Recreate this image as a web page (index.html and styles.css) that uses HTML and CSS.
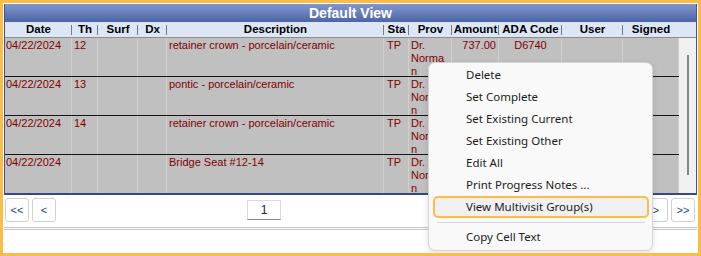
FILE: index.html
```html
<!DOCTYPE html>
<html>
<head>
<meta charset="utf-8">
<link rel="stylesheet" href="styles.css">
</head>
<body>
<div class="frame">
  <div class="panel">
    <div class="title">Default View</div>
    <div class="head">
      <div class="hc">Date</div>
      <div class="hc sep">Th</div>
      <div class="hc sep">Surf</div>
      <div class="hc sep">Dx</div>
      <div class="hc sep">Description</div>
      <div class="hc sep">Sta</div>
      <div class="hc sep">Prov</div>
      <div class="hc sep">Amount</div>
      <div class="hc sep">ADA Code</div>
      <div class="hc sep">User</div>
      <div class="hc sep">Signed</div>
      <div class="hc"></div>
    </div>
    <div class="body">
      <div class="rows">
        <div class="row">
          <div class="c">04/22/2024</div><div class="c th">12</div><div class="c"></div><div class="c"></div>
          <div class="c">retainer crown - porcelain/ceramic</div><div class="c sta">TP</div>
          <div class="c">Dr.<br>Norma<br>n</div><div class="c amt">737.00</div><div class="c ada">D6740</div>
          <div class="c"></div><div class="c"></div>
        </div>
        <div class="row">
          <div class="c">04/22/2024</div><div class="c th">13</div><div class="c"></div><div class="c"></div>
          <div class="c">pontic - porcelain/ceramic</div><div class="c sta">TP</div>
          <div class="c">Dr.<br>Norma<br>n</div><div class="c amt"></div><div class="c ada"></div>
          <div class="c"></div><div class="c"></div>
        </div>
        <div class="row">
          <div class="c">04/22/2024</div><div class="c th">14</div><div class="c"></div><div class="c"></div>
          <div class="c">retainer crown - porcelain/ceramic</div><div class="c sta">TP</div>
          <div class="c">Dr.<br>Norma<br>n</div><div class="c amt"></div><div class="c ada"></div>
          <div class="c"></div><div class="c"></div>
        </div>
        <div class="row">
          <div class="c">04/22/2024</div><div class="c th"></div><div class="c"></div><div class="c"></div>
          <div class="c">Bridge Seat #12-14</div><div class="c sta">TP</div>
          <div class="c">Dr.<br>Norma<br>n</div><div class="c amt"></div><div class="c ada"></div>
          <div class="c"></div><div class="c"></div>
        </div>
      </div>
      <div class="scroll"><div class="thumb"></div></div>
    </div>
  </div>
  <div class="pager">
    <div class="btn">&lt;&lt;</div>
    <div class="btn">&lt;</div>
    <div class="page">1</div>
    <div class="spacer"></div>
    <div class="btn">&gt;</div>
    <div class="btn">&gt;&gt;</div>
  </div>
  <div class="rule"></div>
  <div class="menu">
    <div class="mi">Delete</div>
    <div class="mi">Set Complete</div>
    <div class="mi">Set Existing Current</div>
    <div class="mi">Set Existing Other</div>
    <div class="mi">Edit All</div>
    <div class="mi">Print Progress Notes ...</div>
    <div class="mi active">View Multivisit Group(s)</div>
    <div class="msep"></div>
    <div class="mi">Copy Cell Text</div>
  </div>
</div>
</body>
</html>
```
FILE: styles.css
```css
* { box-sizing: border-box; }
html, body { margin: 0; padding: 0; background: #fff; }
body { font-family: "Liberation Sans", Arial, sans-serif; }

.frame {
  position: relative;
  width: 701px;
  height: 256px;
  border: 3px solid #FBBD48;
  padding: 1px 1px 0 1px;
  background: #fff;
  overflow: hidden;
}

.panel {
  border-left: 1px solid #3A5592;
  border-right: 1px solid #3A5592;
  border-bottom: 2px solid #33497F;
}

.title {
  height: 18px;
  background: linear-gradient(#8397CD, #4C65A7);
  color: #fff;
  font-weight: bold;
  font-size: 14px;
  line-height: 18px;
  text-align: center;
}

.head {
  display: grid;
  grid-template-columns: 67px 26px 40px 29px 217px 25px 43px 47px 63px 61px 56px 17px;
  height: 16px;
  background: #DCE6F4;
  border-bottom: 1px solid #8C8C8C;
}
.hc {
  position: relative;
  font-weight: bold;
  font-size: 11.5px;
  line-height: 15px;
  text-align: center;
  color: #000;
  white-space: nowrap;
}
.hc.sep::before {
  content: "";
  position: absolute;
  left: -1px;
  top: 3px;
  height: 10px;
  width: 1px;
  background: #7A7A7A;
}

.body { display: flex; }
.rows { width: 674px; }
.row {
  display: grid;
  grid-template-columns: 67px 26px 40px 29px 217px 25px 43px 47px 63px 61px 56px;
  height: 39px;
  background: #C0C0C0;
  border-bottom: 1px solid #141414;
}
.row:last-child { height: 38px; border-bottom: none; }
.c {
  border-right: 1px solid #CFCFCF;
  color: #800000;
  font-size: 11px;
  line-height: 13px;
  padding: 1px 1px 0 2px;
  overflow: hidden;
  white-space: nowrap;
}
.c:first-child { padding-left: 1px; }
.c.sta { padding-left: 3px; }
.c.amt { text-align: right; padding-right: 2px; }
.c.ada { text-align: center; }

.scroll {
  width: 17px;
  background: #F0F0F0;
  padding: 17px 0 0 8px;
}
.thumb { width: 2px; height: 120px; background: #858585; }

.pager {
  display: flex;
  align-items: center;
  height: 24px;
  margin-top: 3px;
  padding: 0 2px 0 1px;
  gap: 3px;
}
.btn {
  width: 24px;
  height: 24px;
  border: 1px solid #D0D0D0;
  border-radius: 3px;
  background: #fff;
  font-size: 11px;
  color: #26407A;
  display: flex;
  align-items: center;
  justify-content: center;
}
.page {
  margin-left: 188px;
  width: 34px;
  height: 20px;
  border: 1px solid #DADADA;
  border-bottom-color: #8A8A8A;
  font-size: 12px;
  color: #24184E;
  display: flex;
  align-items: center;
  justify-content: center;
}
.spacer { flex: 1; }

.rule {
  height: 3px;
  margin-top: 5px;
  border-top: 1px solid #C4C4C4;
  border-bottom: 1px solid #C4C4C4;
}

.menu {
  position: absolute;
  left: 425px;
  top: 59px;
  width: 225px;
  height: 189px;
  background: #F9F9F9;
  border: 1px solid #D4D4D4;
  border-radius: 7px;
  box-shadow: 0 2px 6px rgba(0, 0, 0, 0.12);
  padding-top: 1px;
  font-family: "Noto Sans", sans-serif;
  font-size: 11.5px;
  color: #1B1B1B;
}
.mi {
  height: 22px;
  margin: 0 3px 0 4px;
  border: 2px solid transparent;
  border-radius: 5px;
  padding: 0 0 2px 31px;
  display: flex;
  align-items: center;
  white-space: nowrap;
}
.mi.active {
  background: #F0F0F0;
  border-color: #FBBD48;
}
.msep {
  height: 1px;
  background: #D8D8D8;
  margin: 4px 7px 3px 8px;
}
```
